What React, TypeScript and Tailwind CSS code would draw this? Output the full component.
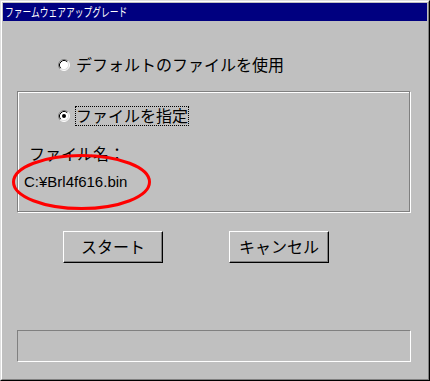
const font = 'font-["Noto_Sans_CJK_JP","Noto_Sans",sans-serif]';

function Radio({ checked }: { checked?: boolean }) {
  return (
    <svg width="12" height="12" viewBox="0 0 12 12" className="shrink-0">
      <circle cx="6" cy="6" r="5" fill="#fff" />
      <path d="M2.11 9.89 A5.5 5.5 0 0 1 9.89 2.11" fill="none" stroke="#808080" strokeWidth="1" />
      <path d="M9.89 2.11 A5.5 5.5 0 0 1 2.11 9.89" fill="none" stroke="#fff" strokeWidth="1" />
      <path d="M2.82 9.18 A4.5 4.5 0 0 1 9.18 2.82" fill="none" stroke="#000" strokeWidth="1" />
      <path d="M9.18 2.82 A4.5 4.5 0 0 1 2.82 9.18" fill="none" stroke="#dfdfdf" strokeWidth="1" />
      {checked && <circle cx="6" cy="6" r="2" fill="#000" />}
    </svg>
  );
}

function Option({ label, checked, focused }: { label: string; checked?: boolean; focused?: boolean }) {
  return (
    <div className="flex h-[20px] items-center">
      <Radio checked={checked} />
      <span
        className={`ml-[5px] flex h-[20px] items-center border pb-[2px] text-[16px] leading-[18px] ${
          focused ? 'border-dotted border-black' : 'border-transparent'
        }`}
      >
        {label}
      </span>
    </div>
  );
}

function Button({ label }: { label: string }) {
  return (
    <div className="flex h-[32px] w-[100px] items-center justify-center border border-t-white border-l-white border-r-black border-b-black pb-[3px] shadow-[inset_-1px_-1px_0_#808080] text-[16px]">
      {label}
    </div>
  );
}

export default function App() {
  return (
    <div className={`h-[381px] w-[430px] bg-[#c0c0c0] text-black ${font}`}>
      <div className="h-full w-full border border-t-[#dfdfdf] border-l-[#dfdfdf] border-r-black border-b-black">
        <div className="h-full w-full border border-t-white border-l-white border-r-[#808080] border-b-[#808080] p-px">
          {/* Title bar */}
          <div className="flex h-[18px] items-center bg-[#000080] pl-[2px]">
            <span className="origin-left scale-x-[0.73] whitespace-nowrap text-[12px] leading-none text-white">
              ファームウェアアップグレード
            </span>
          </div>

          <div className="flex flex-col">
            <div className="mt-[34px] pl-[55px]">
              <Option label="デフォルトのファイルを使用" />
            </div>

            {/* Group box */}
            <div className="relative ml-[14px] mt-[16px] h-[121px] w-[393px] border border-[#808080] shadow-[inset_1px_1px_0_#fff,1px_1px_0_#fff]">
              <div className="mt-[14px] pl-[40px]">
                <Option label="ファイルを指定" checked focused />
              </div>
              <div className="mt-[17px] pl-[11px] text-[16px] leading-[20px]">ファイル名：</div>
              <div className="mt-[9px] pl-[6px] font-['Liberation_Sans',sans-serif] text-[15px] leading-[20px]">
                C:¥Brl4f616.bin
              </div>

              <svg width="140" height="58" className="absolute left-[-6px] top-[62px] overflow-visible">
                <ellipse cx="69.5" cy="28" rx="68" ry="26.5" fill="none" stroke="#ff0000" strokeWidth="3" />
              </svg>
            </div>

            <div className="ml-[60px] mt-[19px] flex gap-[66px]">
              <Button label="スタート" />
              <Button label="キャンセル" />
            </div>

            {/* Status area */}
            <div className="ml-[14px] mt-[67px] h-[32px] w-[394px] border border-t-[#808080] border-l-[#808080] border-r-white border-b-white" />
          </div>
        </div>
      </div>
    </div>
  );
}
